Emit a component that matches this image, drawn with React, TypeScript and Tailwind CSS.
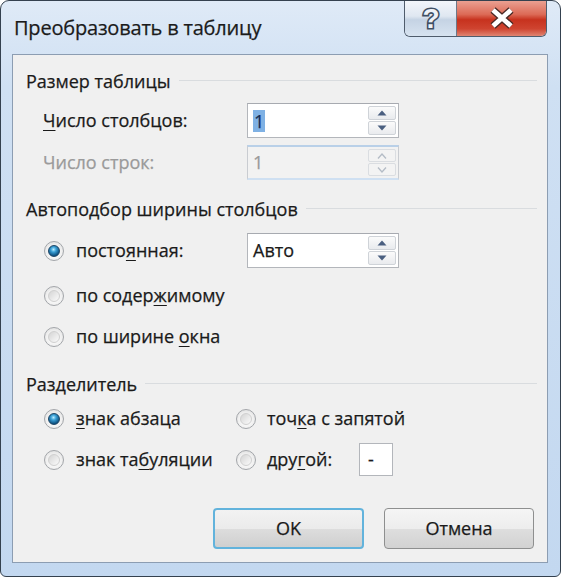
import React from "react";

const FONT = { fontFamily: '"Open Sans", "Noto Sans", sans-serif' };

function Radio({ checked }: { checked?: boolean }) {
  return (
    <span className="w-[20px] h-[20px] rounded-full border border-[#a3a6aa] bg-[radial-gradient(circle_at_50%_60%,#ffffff_0%,#f0f0f0_55%,#d6d6d6_100%)] flex items-center justify-center shrink-0">
      {checked ? (
        <span className="w-[12px] h-[12px] rounded-full border border-[#1d4666] bg-[radial-gradient(circle_at_45%_35%,#b8ecff_0%,#3aa0d6_30%,#0f5585_70%,#0a3a5e_100%)]" />
      ) : (
        <span className="w-[12px] h-[12px] rounded-full border border-[#d0d0d0] bg-[linear-gradient(135deg,#d4d4d4_0%,#ececec_60%,#fafafa_100%)]" />
      )}
    </span>
  );
}

function Arrow({ up, disabled }: { up?: boolean; disabled?: boolean }) {
  const color = disabled ? "#b4bcc6" : "#4a5f80";
  return (
    <svg width="10" height="6" viewBox="0 0 10 6">
      {up ? (
        disabled ? (
          <path d="M1 5.5 L5 1 L9 5.5" fill="none" stroke={color} strokeWidth="1.3" />
        ) : (
          <path d="M0.5 5.5 L5 0.5 L9.5 5.5 Z" fill={color} />
        )
      ) : disabled ? (
        <path d="M1 0.5 L5 5 L9 0.5" fill="none" stroke={color} strokeWidth="1.3" />
      ) : (
        <path d="M0.5 0.5 L5 5.5 L9.5 0.5 Z" fill={color} />
      )}
    </svg>
  );
}

function Spin({
  children,
  disabled,
}: {
  children: React.ReactNode;
  disabled?: boolean;
}) {
  return (
    <div
      className={
        disabled
          ? "w-[152px] h-[35px] flex border border-[#c9ccd1] border-t-[#b9d0e8] border-t-2 border-b-2 border-b-[#cfe0f2] bg-[#f2f2f2]"
          : "w-[152px] h-[35px] flex border border-[#b3b6bb] border-t-[#a7aab0] bg-white"
      }
    >
      <div
        className={
          disabled
            ? "flex-1 flex items-center pl-[5px] text-[18px] text-[#9a9a9a]"
            : "flex-1 flex items-center pl-[5px] text-[18px] text-[#1a1a1a]"
        }
      >
        {children}
      </div>
      <div className="w-[30px] flex flex-col py-[2px] pr-[2px] gap-[1px]">
        <div
          className={
            disabled
              ? "flex-1 flex items-center justify-center border border-[#dadde1] rounded-[2px] bg-[#f3f3f3]"
              : "flex-1 flex items-center justify-center border border-[#cfd3d8] rounded-[2px] bg-[linear-gradient(#fbfbfb,#e9ebee)]"
          }
        >
          <Arrow up disabled={disabled} />
        </div>
        <div
          className={
            disabled
              ? "flex-1 flex items-center justify-center border border-[#dadde1] rounded-[2px] bg-[#f3f3f3]"
              : "flex-1 flex items-center justify-center border border-[#cfd3d8] rounded-[2px] bg-[linear-gradient(#fbfbfb,#e9ebee)]"
          }
        >
          <Arrow disabled={disabled} />
        </div>
      </div>
    </div>
  );
}

function Header({ children }: { children: React.ReactNode }) {
  return (
    <div className="h-[22px] flex items-center pl-[13px] pr-[10px]">
      <span className="text-[18px] text-[#1a1a1a] leading-none">{children}</span>
      <span className="flex-1 ml-[8px] h-[2px] border-t border-[#d9dcdf] border-b-white" />
    </div>
  );
}

function U({ children }: { children: React.ReactNode }) {
  return <u className="underline decoration-1 underline-offset-[3px]">{children}</u>;
}

function Button({ children, primary }: { children: React.ReactNode; primary?: boolean }) {
  return (
    <div
      className={
        primary
          ? "w-[151px] h-[41px] rounded-[4px] border-2 border-[#62b3dc] p-px bg-[linear-gradient(#f2f2f2_0%,#ebebeb_50%,#dddddd_51%,#cfcfcf_100%)] flex items-center justify-center text-[18px] text-[#1a1a1a]"
          : "w-[150px] h-[41px] rounded-[4px] border border-[#8e8f8f] bg-[linear-gradient(#f5f5f5_0%,#ededed_50%,#dedede_51%,#d2d2d2_100%)] flex items-center justify-center text-[18px] text-[#1a1a1a]"
      }
    >
      {children}
    </div>
  );
}

export default function App() {
  return (
    <div
      className="w-[561px] h-[577px] flex flex-col rounded-t-[9px] rounded-b-[6px] border border-[#34414f] bg-[linear-gradient(180deg,#dfeaf7_0%,#cfe0f3_15%,#c3d8f0_100%)] overflow-hidden [-webkit-text-stroke:0.25px_currentColor]"
      style={FONT}
    >
      {/* Title bar */}
      <div className="h-[53px] flex items-start pl-[13px] pr-[13px]">
        <div className="pt-[17px] text-[20px] text-[#1b1b1b] leading-none tracking-[-0.2px]">
          Преобразовать в таблицу
        </div>
        <div className="ml-auto flex h-[37px] -mt-px rounded-b-[6px] border border-t-0 border-[#4f5c6c] overflow-hidden">
          <div className="w-[52px] flex items-center justify-center bg-[linear-gradient(#f4f7fb_0%,#dfe7f1_45%,#c5d3e4_55%,#d7e3f0_100%)] border-r border-[#6c7888]">
            <svg width="26" height="30" viewBox="0 0 26 30">
              <text
                x="13"
                y="25"
                textAnchor="middle"
                fontSize="28"
                fontWeight="bold"
                fontFamily="Liberation Sans, sans-serif"
                fill="none"
                stroke="#3f4f63"
                strokeWidth="3.2"
                style={{ WebkitTextStroke: "0px" }}
              >
                ?
              </text>
              <text
                x="13"
                y="25"
                textAnchor="middle"
                fontSize="28"
                fontWeight="bold"
                fontFamily="Liberation Sans, sans-serif"
                fill="#eef2f7"
                style={{ WebkitTextStroke: "0px" }}
              >
                ?
              </text>
            </svg>
          </div>
          <div className="w-[89px] flex items-center justify-center bg-[linear-gradient(#eba496_0%,#dc6a56_40%,#c7321e_55%,#cf4430_80%,#e08572_100%)]">
            <svg width="30" height="22" viewBox="0 0 30 22">
              <path d="M6 3 L24 19 M24 3 L6 19" stroke="#4a2a26" strokeWidth="7.5" />
              <path d="M6 3 L24 19 M24 3 L6 19" stroke="#ffffff" strokeWidth="4.8" />
            </svg>
          </div>
        </div>
      </div>

      {/* Content */}
      <div className="flex-1 ml-[11px] mr-[12px] mb-[13px] border border-[#8c9db2] bg-[#f0f0f0] flex flex-col">
        <div className="mt-[15px]">
          <Header>Размер таблицы</Header>
        </div>
        <div className="mt-[11px] h-[35px] flex items-center">
          <span className="ml-[30px] w-[204px] text-[18px] text-[#1a1a1a]">
            <U>Ч</U>исло столбцов:
          </span>
          <Spin>
            <span className="bg-[#7fb1e4] text-[#152c55] px-px leading-[22px]">1</span>
          </Spin>
        </div>
        <div className="mt-[7px] h-[35px] flex items-center">
          <span className="ml-[30px] w-[204px] text-[18px] text-[#9a9a9a]">Число строк:</span>
          <Spin disabled>1</Spin>
        </div>

        <div className="mt-[18px]">
          <Header>Автоподбор ширины столбцов</Header>
        </div>
        <div className="mt-[13px] h-[35px] flex items-center">
          <span className="ml-[31px]">
            <Radio checked />
          </span>
          <span className="ml-[12px] w-[171px] text-[18px] text-[#1a1a1a]">
            посто<U>я</U>нная:
          </span>
          <Spin>Авто</Spin>
        </div>
        <div className="mt-[10px] h-[35px] flex items-center">
          <span className="ml-[31px]">
            <Radio />
          </span>
          <span className="ml-[12px] text-[18px] text-[#1a1a1a]">
            по содер<U>ж</U>имому
          </span>
        </div>
        <div className="mt-[6px] h-[35px] flex items-center">
          <span className="ml-[31px]">
            <Radio />
          </span>
          <span className="ml-[12px] text-[18px] text-[#1a1a1a]">
            по ширине <U>о</U>кна
          </span>
        </div>

        <div className="mt-[19px]">
          <Header>Разделитель</Header>
        </div>
        <div className="mt-[7px] h-[33px] flex items-center">
          <span className="ml-[31px]">
            <Radio checked />
          </span>
          <span className="ml-[12px] w-[160px] text-[18px] text-[#1a1a1a]">
            <U>з</U>нак абзаца
          </span>
          <Radio />
          <span className="ml-[11px] text-[18px] text-[#1a1a1a]">
            точ<U>к</U>а с запятой
          </span>
        </div>
        <div className="mt-[8px] h-[33px] flex items-center">
          <span className="ml-[31px]">
            <Radio />
          </span>
          <span className="ml-[12px] w-[160px] text-[18px] text-[#1a1a1a]">
            знак та<U>б</U>уляции
          </span>
          <Radio />
          <span className="ml-[11px] w-[92px] text-[18px] text-[#1a1a1a]">
            дру<U>г</U>ой:
          </span>
          <div className="w-[34px] h-[33px] border border-[#b3b6bb] bg-white flex items-start pl-[8px] pt-[2px] text-[18px] text-[#1a1a1a]">
            -
          </div>
        </div>

        <div className="mt-[32px] flex justify-end gap-[20px] pr-[13px]">
          <Button primary>OK</Button>
          <Button>Отмена</Button>
        </div>
      </div>
    </div>
  );
}
